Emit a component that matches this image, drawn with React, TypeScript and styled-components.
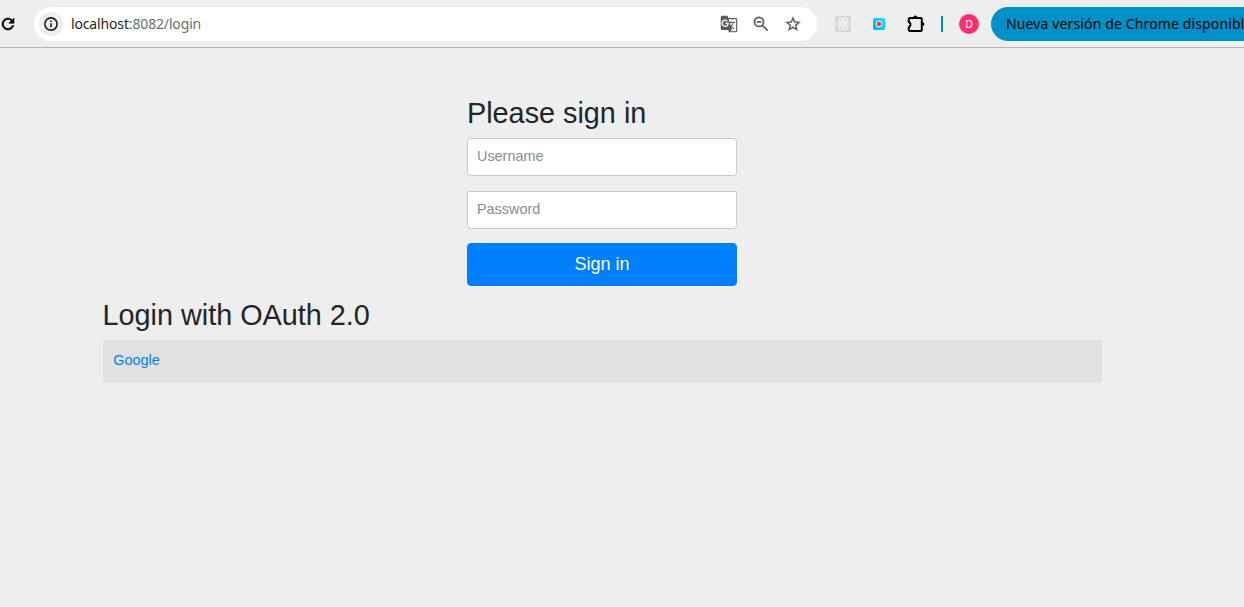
import React from "react";
import styled, { createGlobalStyle } from "styled-components";
import { MdGTranslate } from "react-icons/md";

const GlobalStyle = createGlobalStyle`
  * { box-sizing: border-box; }
  html, body { margin: 0; height: 100%; overflow: hidden; }
  body {
    background: #eeeeee;
    color: #212529;
    font-family: "Liberation Sans", Arial, sans-serif;
    font-size: 14.4px;
    line-height: 1.5;
  }
`;

const Toolbar = styled.header`
  display: flex;
  align-items: center;
  width: 1244px;
  height: 48px;
  border-bottom: 1px solid #b5b5b5;
  overflow: hidden;
  color: #000;
  font-family: "Noto Sans", "Open Sans", sans-serif;
  font-size: 14px;
  line-height: 20px;

  svg { display: block; flex: none; }
`;

const ReloadButton = styled.div`
  flex: none;
  width: 34px;

  svg { margin-left: -1px; }
`;

const AddressBar = styled.div`
  display: flex;
  align-items: center;
  flex: none;
  width: 783px;
  height: 34px;
  padding: 0 15px 0 5px;
  border-radius: 17px;
  background: #fff;
`;

const SiteInfo = styled.div`
  display: grid;
  place-items: center;
  width: 24px;
  height: 24px;
  margin-right: 8px;
  border-radius: 50%;
  background: #eeeeee;
`;

const Url = styled.div`
  flex: 1;
  color: #1f1f1f;
  white-space: nowrap;
  letter-spacing: -0.15px;
`;

const UrlPath = styled.span`
  color: #6d6d6d;
`;

const AddressActions = styled.div`
  display: flex;
  gap: 14px;
  color: #5a5a5a;
`;

const Extensions = styled.div`
  display: flex;
  align-items: center;
  flex: none;
  margin-left: 17px;
  gap: 18px;
`;

const Divider = styled.div`
  flex: none;
  width: 2px;
  height: 16px;
  margin: 0 16px;
  background: #0090c8;
`;

const Avatar = styled.div`
  display: grid;
  place-items: center;
  flex: none;
  width: 20px;
  height: 20px;
  margin-right: 12px;
  border-radius: 50%;
  background: #ff2d72;
  color: #fff;
  font-size: 10.5px;
  line-height: 20px;
`;

const UpdateChip = styled.div`
  flex: none;
  width: 290px;
  height: 34px;
  padding-left: 15px;
  border-radius: 17px;
  background: #0090c8;
  line-height: 34px;
  white-space: nowrap;
  letter-spacing: 0.13px;
`;

const Page = styled.main`
  width: 1027px;
  margin-left: 88.5px;
  padding: 48px 14px 0;
`;

const SignInForm = styled.form`
  display: flex;
  flex-direction: column;
  width: 270px;
  margin: 0 auto;
`;

const Heading = styled.h2`
  margin: 0 0 7px;
  font-size: 28.8px;
  font-weight: 400;
  line-height: 35px;
`;

const Field = styled.input<{ $squareTop?: boolean }>`
  width: 100%;
  height: 38px;
  margin: 0 0 ${({ $squareTop }) => ($squareTop ? "14px" : "15px")};
  padding: 8px 9px 10px;
  border: 1px solid #c8cacc;
  border-radius: ${({ $squareTop }) => ($squareTop ? "0 0 3.6px 3.6px" : "3.6px")};
  background: #fff;
  font: 14.4px "Liberation Sans", Arial, sans-serif;
  outline: none;

  &::placeholder { color: #868e96; opacity: 1; }
`;

const SubmitButton = styled.button`
  height: 43px;
  margin: 0 0 12px;
  padding: 0;
  border: 0;
  border-radius: 4.3px;
  background: #007ffb;
  color: #fff;
  font: 18px/27px "Liberation Sans", Arial, sans-serif;
`;

const ProviderList = styled.ul`
  margin: 0;
  padding: 0;
  list-style: none;
`;

const ProviderRow = styled.li`
  height: 43px;
  padding: 10px 10.8px;
  background: #e1e1e1;
`;

const ProviderLink = styled.a`
  color: #007ffb;
  text-decoration: none;
`;

export default function App() {
  return (
    <>
      <GlobalStyle />
      <Toolbar>
        <ReloadButton>
          <svg width="18" height="18" viewBox="0 0 24 24" stroke="#000" strokeWidth="0.7">
            <path d="M17.65 6.35A7.958 7.958 0 0 0 12 4c-4.42 0-7.99 3.58-7.99 8s3.57 8 7.99 8c3.73 0 6.84-2.55 7.73-6h-2.08A5.99 5.99 0 0 1 12 18c-3.31 0-6-2.69-6-6s2.69-6 6-6c1.66 0 3.14.69 4.22 1.78L13 11h7V4l-2.35 2.35z" />
          </svg>
        </ReloadButton>
        <AddressBar>
          <SiteInfo>
            <svg width="16" height="16" viewBox="0 0 16 16" fill="none" stroke="#1f1f1f" strokeWidth="1.6">
              <circle cx="8" cy="8" r="6.1" />
              <path d="M8 7.2v4M8 4.5v1.6" />
            </svg>
          </SiteInfo>
          <Url>
            localhost<UrlPath>:8082/login</UrlPath>
          </Url>
          <AddressActions>
            <MdGTranslate size={18} />
            <svg width="18" height="18" viewBox="0 0 18 18" fill="none" stroke="currentColor" strokeWidth="1.8">
              <circle cx="7" cy="6.9" r="4.5" />
              <path d="M10.3 10.3l5.4 5.4M4.8 6.9h4.4" />
            </svg>
            <svg width="18" height="18" viewBox="0 0 24 24" fill="currentColor" stroke="currentColor" strokeWidth="0.4">
              <path d="M22 9.24l-7.19-.62L12 2 9.19 8.63 2 9.24l5.46 4.73L5.82 21 12 17.27 18.18 21l-1.63-7.03L22 9.24zM12 15.4l-3.76 2.27 1-4.28-3.32-2.88 4.38-.38L12 6.1l1.71 4.04 4.38.38-3.32 2.88 1 4.28L12 15.4z" />
            </svg>
          </AddressActions>
        </AddressBar>
        <Extensions>
          <svg width="18" height="18" viewBox="0 0 18 18">
            <path d="M1 1h16v16H1z" fill="#d6d6d6" />
            <g fill="none" stroke="#f8f8f8" strokeWidth="0.9">
              <ellipse cx="9" cy="9" rx="6.7" ry="2.4" />
              <ellipse cx="9" cy="9" rx="6.7" ry="2.4" transform="rotate(60 9 9)" />
              <ellipse cx="9" cy="9" rx="6.7" ry="2.4" transform="rotate(120 9 9)" />
            </g>
            <circle cx="9" cy="9" r="1.3" fill="#f8f8f8" />
          </svg>
          <svg width="18" height="18" viewBox="0 0 18 18">
            <defs>
              <linearGradient id="recorder" x1="1" y1="0" x2="0" y2="1">
                <stop offset="0" stopColor="#00f0ff" />
                <stop offset="1" stopColor="#00a9f5" />
              </linearGradient>
            </defs>
            <rect x="3" y="3" width="12" height="12" rx="2" fill="url(#recorder)" />
            <circle cx="9" cy="9" r="3" fill="#ff4342" stroke="#fff" strokeWidth="1" />
          </svg>
          <svg width="19" height="18" viewBox="-1 0 19 18">
            <path
              d="M2.8 3h11q1 0 1 1v11q0 1-1 1h-11q-1 0-1-1v-2.8a2.8 2.8 0 0 0 0-5.2V4q0-1 1-1z"
              fill="none"
              stroke="#000"
              strokeWidth="2"
            />
            <path d="M6.2 2.5a2.1 2.1 0 0 1 4.2 0zM15.3 7a2.1 2.1 0 0 1 0 4.2z" />
          </svg>
        </Extensions>
        <Divider />
        <Avatar>D</Avatar>
        <UpdateChip>Nueva versión de Chrome disponible</UpdateChip>
      </Toolbar>
      <Page>
        <SignInForm onSubmit={(event) => event.preventDefault()}>
          <Heading>Please sign in</Heading>
          <Field type="text" placeholder="Username" />
          <Field type="password" placeholder="Password" $squareTop />
          <SubmitButton type="submit">Sign in</SubmitButton>
        </SignInForm>
        <Heading>Login with OAuth 2.0</Heading>
        <ProviderList>
          <ProviderRow>
            <ProviderLink href="#">Google</ProviderLink>
          </ProviderRow>
        </ProviderList>
      </Page>
    </>
  );
}
